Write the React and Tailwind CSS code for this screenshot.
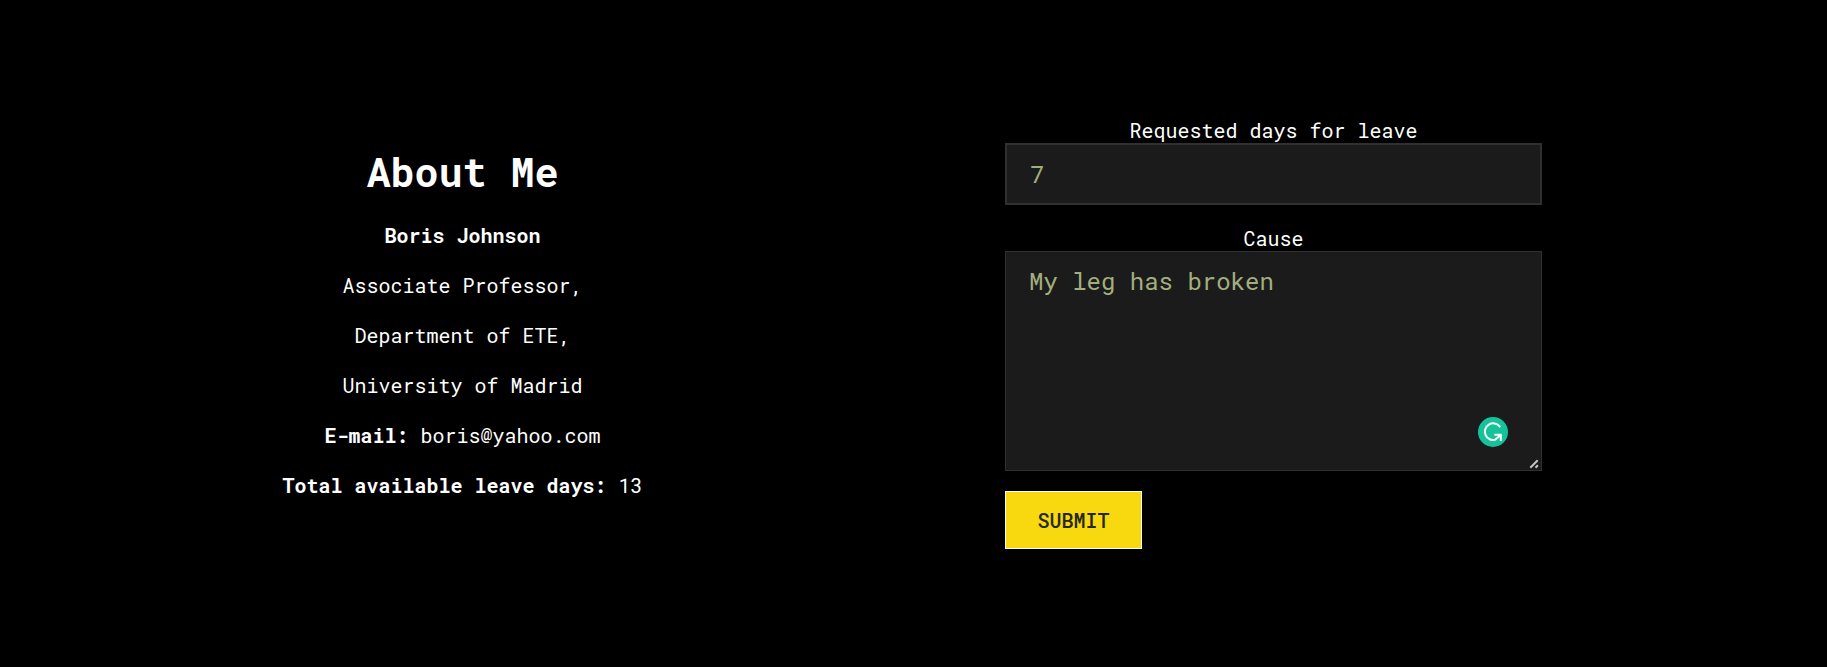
import { useState } from "react";

function GrammarBadge() {
  return (
    <svg viewBox="0 0 30 30" className="absolute right-[34px] bottom-[24px] size-[30px]">
      <circle cx="15" cy="15" r="15" fill="#15c39a" />
      <path d="M21.6 9.4A8.3 8.3 0 1 0 17.6 22.6" fill="none" stroke="#fff" strokeWidth="2" strokeLinecap="round" />
      <path d="M16.4 17.8H23.6M22.8 17.8V24M22.6 18L17.4 22.6" fill="none" stroke="#fff" strokeWidth="2" />
    </svg>
  );
}

function ResizeGrip() {
  return (
    <svg viewBox="0 0 12 12" className="pointer-events-none absolute right-[1px] bottom-[1px] size-[12px]">
      <path d="M1.3 9.7L8.7 2.3M6.5 9.7L8.9 7.3" fill="none" stroke="#c4c4c4" strokeWidth="2" />
    </svg>
  );
}

export default function App() {
  const [days, setDays] = useState("7");
  const [cause, setCause] = useState("My leg has broken");
  return (
    <main className="flex h-[667px] w-full bg-black text-center font-['Roboto_Mono','Liberation_Mono',monospace] text-[20px] leading-[30px] text-white">
      <section className="ml-[194px] flex w-[537px] flex-col gap-[20px] pt-[147px]">
        <h1 className="mb-[3px] text-[40px] leading-[50px] font-bold">About Me</h1>
        <p className="font-bold">Boris Johnson</p>
        <p>Associate Professor,</p>
        <p>Department of ETE,</p>
        <p>University of Madrid</p>
        <p><b>E-mail:</b> boris@yahoo.com</p>
        <p><b>Total available leave days:</b> 13</p>
      </section>
      <form className="ml-[274px] flex w-[537px] flex-col items-start pt-[118px]" onSubmit={(e) => e.preventDefault()}>
        <label htmlFor="days" className="mb-[1px] block w-full text-[20px] leading-[24px]">Requested days for leave</label>
        <input id="days" value={days} onChange={(e) => setDays(e.target.value)} className="mb-[21px] h-[62px] w-full border-2 border-[#303030] bg-[#1b1b1b] px-[23px] text-[24px] leading-[30px] text-[#a3ae7f] outline-none" />
        <label htmlFor="cause" className="mb-[1px] block w-full text-[20px] leading-[24px]">Cause</label>
        <div className="relative h-[220px] w-full">
          <textarea id="cause" value={cause} onChange={(e) => setCause(e.target.value)} spellCheck={false} className="block h-[220px] w-full resize-none border border-[#303030] bg-[#1b1b1b] px-[23px] py-[13px] text-[24px] leading-[32px] text-[#a3ae7f] outline-none" />
          <GrammarBadge />
          <ResizeGrip />
        </div>
        <button className="mt-[20px] h-[58px] w-[137px] border border-white bg-[#f8d90f] text-[20px] leading-[30px] font-medium text-[#252710]">SUBMIT</button>
      </form>
    </main>
  );
}
